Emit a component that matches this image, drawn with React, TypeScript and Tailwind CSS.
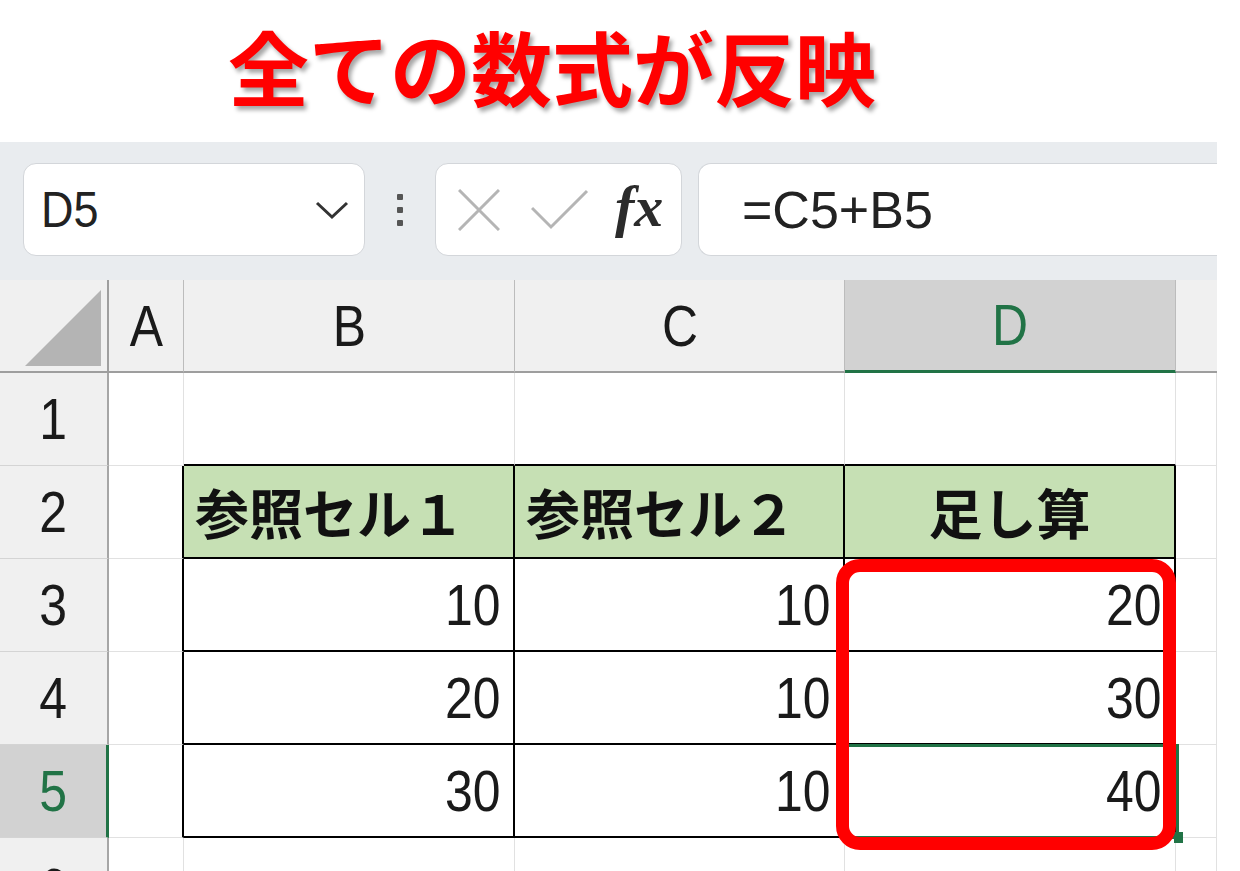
import React from "react";

const LAT = "font-['Liberation_Sans',Arial,sans-serif]";
const JP = "font-['Noto_Sans_CJK_JP','Noto_Sans',sans-serif]";

function Num({ v, green, right }: { v: string; green?: boolean; right?: boolean }) {
  return (
    <span
      className={
        "inline-block scale-x-[0.86] text-[58px] leading-none " +
        LAT +
        (right ? " origin-right" : "") +
        (green ? " text-[#217346]" : " text-[#1a1a1a]")
      }
    >
      {v}
    </span>
  );
}

function FormulaBar() {
  return (
    <div className="w-[1217px] h-[138px] bg-[#e9ecef] pt-[21px] flex items-start">
      <div className="ml-[23px] w-[342px] h-[93px] bg-white rounded-[13px] border border-[#d3d6da] flex items-center justify-between pl-[17px] pr-[15px]">
        <span className={"inline-block origin-left scale-x-[0.9] text-[50px] leading-none text-[#222] " + LAT}>D5</span>
        <svg width="34" height="20" viewBox="0 0 34 20">
          <path d="M2 3 L17 17 L32 3" fill="none" stroke="#333" strokeWidth="3" />
        </svg>
      </div>
      <div className="w-[70px] h-[93px] flex flex-col items-center justify-center gap-[7px]">
        <div className="w-[6px] h-[6px] rounded-[1px] bg-[#555]" />
        <div className="w-[6px] h-[6px] rounded-[1px] bg-[#555]" />
        <div className="w-[6px] h-[6px] rounded-[1px] bg-[#555]" />
      </div>
      <div className="w-[247px] h-[93px] bg-white rounded-[13px] border border-[#d3d6da] flex items-center pl-[22px]">
        <svg width="42" height="42" viewBox="0 0 42 42">
          <path d="M1 1 L41 41 M41 1 L1 41" stroke="#b5b5b5" strokeWidth="3" fill="none" />
        </svg>
        <svg width="58" height="42" viewBox="0 0 58 42" className="ml-[31px]">
          <path d="M1 19 L20 38 L56 2" stroke="#b5b5b5" strokeWidth="3" fill="none" />
        </svg>
        <span className="ml-[26px] text-[58px] leading-none italic font-semibold text-[#2b2b2b] font-['Liberation_Serif',serif] -mt-[6px]">
          fx
        </span>
      </div>
      <div className="ml-[16px] flex-1 h-[93px] bg-white rounded-l-[13px] border-l border-y border-[#d3d6da] flex items-center pl-[43px]">
        <span className={"text-[52px] leading-none text-[#222] " + LAT}>=C5+B5</span>
      </div>
    </div>
  );
}

const HDR =
  "flex items-center justify-center bg-[#f0f0f0] border-r border-r-[#bcbcbc] border-b-2 border-b-[#9e9e9e]";
const ROWH =
  "flex items-center justify-center bg-[#f0f0f0] border-r-2 border-r-[#a6a6a6] border-b border-b-[#d4d4d4]";
const ROWH_SEL =
  "flex items-center justify-center bg-[#d2d2d2] border-r-[3px] border-r-[#217346] border-b border-b-[#d4d4d4]";
const CELL = "bg-white border-r border-r-[#e1e1e1] border-b border-b-[#e1e1e1]";
const CELL_TOPB = "bg-white border-r border-r-[#e1e1e1] border-b-2 border-b-black";
const CELL_LEFTB = "bg-white border-r-2 border-r-black border-b border-b-[#e1e1e1]";
const TCELL =
  "bg-white border-r-2 border-r-black border-b-2 border-b-black flex items-center justify-end pr-[12px]";
const THEAD =
  "bg-[#c6e0b4] border-r-2 border-r-black border-b-2 border-b-black flex items-center";

function Sheet() {
  const data = [
    ["10", "10", "20"],
    ["20", "10", "30"],
    ["30", "10", "40"],
  ];
  return (
    <div className="relative w-[1217px] grid grid-cols-[109px_75px_331px_330px_331px_41px] grid-rows-[repeat(7,93px)]">
      {/* header row */}
      <div className="bg-[#f0f0f0] border-r-2 border-r-[#9e9e9e] border-b-2 border-b-[#9e9e9e] flex items-end justify-end pr-[6px] pb-[5px]">
        <svg width="76" height="76" viewBox="0 0 76 76">
          <polygon points="76,0 76,76 0,76" fill="#b4b4b4" />
        </svg>
      </div>
      <div className={HDR}>
        <Num v="A" />
      </div>
      <div className={HDR}>
        <Num v="B" />
      </div>
      <div className={HDR}>
        <Num v="C" />
      </div>
      <div className="flex items-center justify-center bg-[#d2d2d2] border-r border-r-[#bcbcbc] border-b-[3px] border-b-[#217346]">
        <Num v="D" green />
      </div>
      <div className="bg-[#f0f0f0] border-b-2 border-b-[#9e9e9e]" />

      {/* row 1 */}
      <div className={ROWH}>
        <Num v="1" />
      </div>
      <div className={CELL} />
      <div className={CELL_TOPB} />
      <div className={CELL_TOPB} />
      <div className={CELL_TOPB} />
      <div className={CELL} />

      {/* row 2 */}
      <div className={ROWH}>
        <Num v="2" />
      </div>
      <div className={CELL_LEFTB} />
      <div className={THEAD + " justify-start pl-[11px]"}>
        <span className={"text-[54px] leading-none font-bold text-[#111] " + JP}>参照セル１</span>
      </div>
      <div className={THEAD + " justify-start pl-[11px]"}>
        <span className={"text-[54px] leading-none font-bold text-[#111] " + JP}>参照セル２</span>
      </div>
      <div className={THEAD + " justify-center"}>
        <span className={"text-[54px] leading-none font-bold text-[#111] " + JP}>足し算</span>
      </div>
      <div className={CELL} />

      {data.map((r, i) => (
        <React.Fragment key={i}>
          <div className={i === 2 ? ROWH_SEL : ROWH}>
            <Num v={String(i + 3)} green={i === 2} />
          </div>
          <div className={CELL_LEFTB} />
          <div className={TCELL}>
            <Num v={r[0]} right />
          </div>
          <div className={TCELL}>
            <Num v={r[1]} right />
          </div>
          <div className={TCELL}>
            <Num v={r[2]} right />
          </div>
          <div className={CELL} />
        </React.Fragment>
      ))}

      {/* row 6 */}
      <div className={ROWH + " items-start pt-[22px]"}>
        <Num v="6" />
      </div>
      <div className={CELL} />
      <div className={CELL} />
      <div className={CELL} />
      <div className={CELL} />
      <div className={CELL} />

      {/* selection D5 */}
      <div className="absolute left-[845px] top-[464px] w-[334px] h-[95px] border-[3px] border-[#217346] pointer-events-none" />
      <div className="absolute left-[1174px] top-[552px] w-[9px] h-[11px] bg-[#217346] pointer-events-none" />

      {/* red highlight */}
      <div className="absolute left-[836px] top-[279px] w-[340px] h-[291px] border-[13px] border-[#ff0000] rounded-[24px] pointer-events-none" />
    </div>
  );
}

export default function App() {
  return (
    <div className="w-[1240px] h-[871px] overflow-hidden bg-white">
      <div className="h-[142px] pl-[228px] pt-[24px]">
        <h1
          className={
            "text-[81px] leading-none font-bold text-[#ff0000] [text-shadow:3px_4px_4px_rgba(0,0,0,0.35)] " +
            JP
          }
        >
          全ての数式が反映
        </h1>
      </div>
      <FormulaBar />
      <Sheet />
    </div>
  );
}
